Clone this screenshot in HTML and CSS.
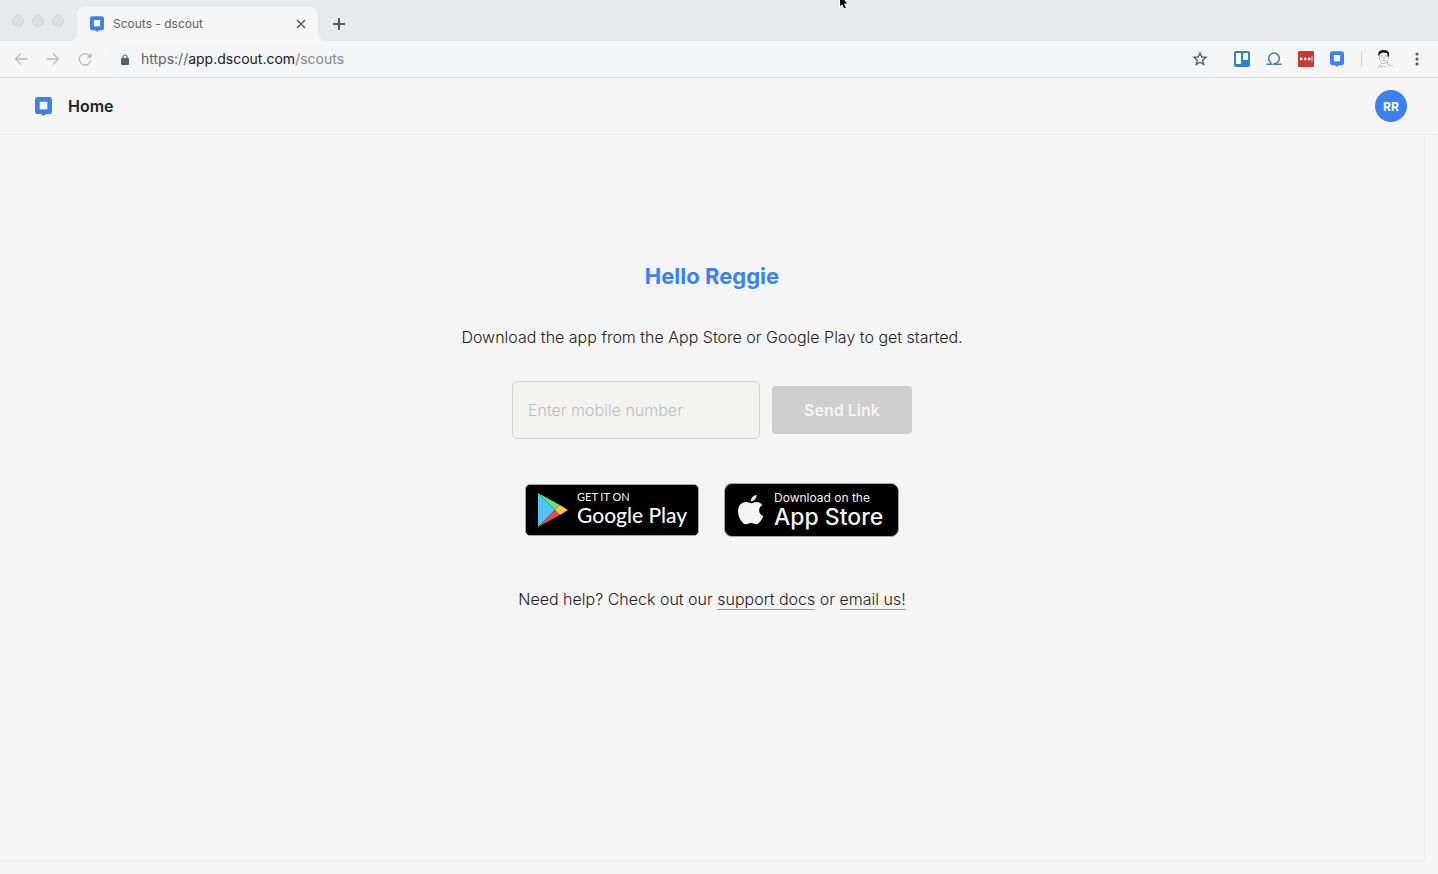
FILE: index.html
```html
<!DOCTYPE html>
<html lang="en">
<head>
  <meta charset="UTF-8">
  <meta name="viewport" content="width=device-width, initial-scale=1">
  <title>Scouts - dscout</title>
  <link rel="stylesheet" href="styles.css">
</head>
<body>
  <!-- Browser tabs -->
  <div class="tab-strip">
    <div class="window-dots">
      <span class="dot"></span>
      <span class="dot"></span>
      <span class="dot"></span>
    </div>
    <div class="tab">
      <svg class="tab-logo" viewBox="0 0 18 20"><path d="M3 0h12a3 3 0 0 1 3 3v12a3 3 0 0 1-3 3h-3l-3 2-3-2H3a3 3 0 0 1-3-3V3a3 3 0 0 1 3-3z" fill="#3b82f0"/><path d="M5 5h8v8H5z" fill="#fff"/></svg>
      <span class="tab-title">Scouts - dscout</span>
      <button class="icon-button" aria-label="Close tab">
        <svg width="10" height="10" viewBox="0 0 10 10"><path d="M1 1l8 8M9 1L1 9" stroke="#5a5d61" stroke-width="1.500"/></svg>
      </button>
    </div>
    <button class="icon-button new-tab" aria-label="New tab">
      <svg width="12" height="12" viewBox="0 0 12 12"><path d="M6 0v12M0 6h12" stroke="#55585c" stroke-width="2"/></svg>
    </button>
    <svg class="cursor" width="12" height="10" viewBox="0 0 12 10"><path d="M.5-1v8L3 5l2 4 2.500-1-2-4H9L5-1z" fill="#000" stroke="#fff" stroke-width="1"/></svg>
  </div>

  <!-- Address bar -->
  <div class="toolbar">
    <div class="nav-buttons">
      <button class="icon-button" aria-label="Back">
        <svg width="14" height="14" viewBox="0 0 14 14"><path d="M13.500 7H1.500M7 1.500L1.500 7 7 12.500" fill="none" stroke="#b9bbbd" stroke-width="1.300"/></svg>
      </button>
      <button class="icon-button" aria-label="Forward">
        <svg width="14" height="14" viewBox="0 0 14 14"><path d="M.5 7h12M7 1.500L12.500 7 7 12.500" fill="none" stroke="#b9bbbd" stroke-width="1.300"/></svg>
      </button>
      <button class="icon-button" aria-label="Reload">
        <svg width="14" height="14" viewBox="0 0 14 14"><path d="M11.800 4.200A5.700 5.700 0 1 0 12.700 8" fill="none" stroke="#b9bbbd" stroke-width="1.400"/><path d="M13.500.8v5H8.500z" fill="#b9bbbd"/></svg>
      </button>
    </div>
    <div class="address">
      <svg class="lock" width="8" height="11" viewBox="0 0 8 11"><path d="M2 5V3a2 2 0 0 1 4 0v2" fill="none" stroke="#5b5e62" stroke-width="1.200"/><rect y="4" width="8" height="7" rx="1" fill="#5b5e62"/></svg>
      <span class="url">https://<span class="url-host">app.dscout.com</span><span class="url-path">/scouts</span></span>
      <button class="icon-button" aria-label="Bookmark">
        <svg width="16" height="16" viewBox="0 0 16 16"><path d="M8 2l1.700 4 4.300.4-3.300 2.800 1 4.300L8 11.200l-3.700 2.300 1-4.300L2 6.400 6.300 6z" fill="none" stroke="#5b5e62" stroke-width="1.400"/></svg>
      </button>
    </div>
    <div class="extensions">
      <svg width="16" height="16" viewBox="0 0 16 16"><rect width="16" height="16" rx="2" fill="#2f7fca"/><rect x="2" y="2" width="5" height="11" rx="1" fill="#fff"/><rect x="9" y="2" width="5" height="7" rx="1" fill="#fff"/></svg>
      <svg width="16" height="16" viewBox="0 0 16 16"><path d="M.5 13.300H5.500L4.300 11.200A5.300 5.300 0 1 1 8 12.700M7 13.300h8.500" fill="none" stroke="#4381bd" stroke-width="1.600"/></svg>
      <svg width="16" height="16" viewBox="0 0 16 16"><rect width="16" height="16" rx="1" fill="#c63a33"/><circle cx="3.200" cy="8" r="1.400" fill="#fff"/><circle cx="7.200" cy="8" r="1.400" fill="#fff"/><circle cx="11.200" cy="8" r="1.400" fill="#fff"/><path d="M14 5v6" stroke="#f0b9b5"/></svg>
      <svg class="tab-logo" viewBox="0 0 18 20"><path d="M3 0h12a3 3 0 0 1 3 3v12a3 3 0 0 1-3 3h-3l-3 2-3-2H3a3 3 0 0 1-3-3V3a3 3 0 0 1 3-3z" fill="#3b82f0"/><path d="M5 5h8v8H5z" fill="#fff"/></svg>
    </div>
    <div class="profile">
      <svg width="18" height="20" viewBox="0 0 18 20"><path d="M3.500 4v6.500l3 4 4.500-1 1-3V4" fill="#fff" stroke="#aaa" stroke-width=".8"/><path d="M2.500 7C1.500 3 4 1 7.500 1s6.500 1.500 5.500 6l-1 1-1-4-4-.5L4 5z" fill="#171717"/><path d="M5 7h2M9 7h2M8 8v2M6.500 11.500h3" stroke="#777" stroke-width=".8"/><path d="M6 14l-2 2-2 3M11 13l1 3 5 1M4 18l3-1 3 1" fill="none" stroke="#bbb" stroke-width=".8"/></svg>
      <button class="icon-button" aria-label="Menu">
        <svg width="4" height="14" viewBox="0 0 4 14"><circle cx="2" cy="2" r="1.600" fill="#5b5e62"/><circle cx="2" cy="7" r="1.600" fill="#5b5e62"/><circle cx="2" cy="12" r="1.600" fill="#5b5e62"/></svg>
      </button>
    </div>
  </div>

  <!-- App header -->
  <header class="app-header">
    <a class="home-link" href="#">
      <svg width="17" height="19" viewBox="0 0 18 20"><path d="M3 0h12a3 3 0 0 1 3 3v12a3 3 0 0 1-3 3h-3l-3 2-3-2H3a3 3 0 0 1-3-3V3a3 3 0 0 1 3-3z" fill="#3b82f0"/><path d="M5 5h8v8H5z" fill="#fff"/></svg>
      Home
    </a>
    <button class="avatar">RR</button>
  </header>

  <!-- Main content -->
  <main class="welcome">
    <h1 class="welcome-title">Hello Reggie</h1>
    <p class="welcome-text">Download the app from the App Store or Google Play to get started.</p>
    <form class="link-form">
      <input class="phone-input" type="tel" placeholder="Enter mobile number" aria-label="Enter mobile number">
      <button class="send-button" type="submit" disabled>Send Link</button>
    </form>
    <div class="stores">
      <a class="store-badge google" href="#">
        <svg width="32" height="36" viewBox="0 0 32 36"><path d="M1 1v34l17-17z" fill="#4fc3f3"/><path d="M1 1l22 12-5 5z" fill="#66e07d"/><path d="M1 35l22-12-5-5z" fill="#e5484f"/><path d="M23 13l8 5-8 5-5-5z" fill="#fbc740"/></svg>
        <span class="store-label"><span class="store-small">GET IT ON</span><span class="store-name">Google Play</span></span>
      </a>
      <a class="store-badge apple" href="#">
        <svg width="28" height="32" viewBox="0 0 28 32"><path d="M19.500 1c.2 3.300-2.500 6.300-5.600 6.200C13.600 4.100 16.500 1.200 19.500 1z" fill="#f4f4f4"/><path d="M14.200 9.200c1.200 0 3-1.500 5.600-1.300 2.400.2 4.300 1.200 5.500 3-4.700 3-4 9.300.9 11.200-1 3-3.700 8-6.700 8.200-2 .1-2.900-1.200-5.300-1.200s-3.300 1.200-5.200 1.200C5.200 30.300 1 23.500 1 17.300c0-5.900 3.900-9.300 8-9.300 2.200 0 4 1.200 5.200 1.200z" fill="#f4f4f4"/></svg>
        <span class="store-label"><span class="store-small">Download on the</span><span class="store-name">App Store</span></span>
      </a>
    </div>
    <p class="help">Need help? Check out our <a href="#">support docs</a> or <a href="#">email us!</a></p>
  </main>
</body>
</html>
```
FILE: styles.css
```css
* {
  margin: 0;
  padding: 0;
  box-sizing: border-box;
}
body {
  min-height: 100vh;
  display: flex;
  flex-direction: column;
  background: #f5f5f5;
  color: #222;
  font-family: Inter, sans-serif;
  font-size: 16px;
}
button {
  font-family: inherit;
  border: none;
  cursor: pointer;
}
svg {
  display: block;
  flex-shrink: 0;
}
.icon-button {
  background: none;
}
/* Tab strip */
.tab-strip {
  position: relative;
  height: 41px;
  display: flex;
  align-items: flex-end;
  background: #e7e9eb;
}
.window-dots {
  display: flex;
  gap: 8px;
  padding: 0 13px 14px 12px;
}
.dot {
  width: 12px;
  height: 12px;
  border: 1px solid #d4d5d6;
  border-radius: 50%;
  background: #dedede;
}
.tab {
  position: relative;
  width: 241px;
  height: 34px;
  display: flex;
  align-items: center;
  padding: 0 12px 0 13px;
  border-radius: 8px 8px 0 0;
  background: #f5f5f5;
}
/* Flared feet of the active tab */
.tab::before,
.tab::after {
  content: "";
  position: absolute;
  bottom: 0;
  width: 8px;
  height: 8px;
}
.tab::before {
  right: 100%;
  background: radial-gradient(circle at 0 0, transparent 8px, #f5f5f5 8px);
}
.tab::after {
  left: 100%;
  background: radial-gradient(circle at 100% 0, transparent 8px, #f5f5f5 8px);
}
.tab-logo {
  width: 14px;
  height: 16px;
}
.tab-title {
  flex: 1;
  margin-left: 9px;
  padding-bottom: 2px;
  color: #606367;
  font-size: 12px;
}
.new-tab {
  margin-left: 15px;
  padding-bottom: 11px;
}
.cursor {
  position: absolute;
  top: 0;
  left: 58%;
  margin-left: 5px;
}
/* Toolbar */
.toolbar {
  height: 37px;
  display: flex;
  align-items: center;
  padding: 0 19px 0 14px;
  border-bottom: 1px solid #dcdcdc;
}
.nav-buttons {
  display: flex;
  gap: 18px;
}
.address {
  flex: 1;
  height: 28px;
  display: flex;
  align-items: center;
  margin-left: 16px;
  padding: 0 8px 0 13px;
  border-radius: 14px;
  background: #f2f4f5;
}
.url {
  flex: 1;
  margin-left: 12px;
  padding-bottom: 2px;
  color: #606367;
  font-size: 14px;
}
.url-host {
  color: #202124;
}
.url-path {
  color: #85888b;
}
.extensions {
  display: flex;
  align-items: center;
  gap: 16px;
  margin-left: 18px;
}
.profile {
  height: 16px;
  display: flex;
  align-items: center;
  gap: 21px;
  margin-left: 17px;
  padding-left: 14px;
  border-left: 1px solid #d2d2d2;
}
/* App header */
.app-header {
  height: 57px;
  display: flex;
  align-items: center;
  justify-content: space-between;
  padding: 0 31px 0 35px;
  border-bottom: 1px solid #e9e9e9;
}
.home-link {
  display: flex;
  align-items: center;
  gap: 16px;
  color: #222;
  font-size: 16px;
  font-weight: 600;
  text-decoration: none;
}
.avatar {
  width: 32px;
  height: 32px;
  border-radius: 50%;
  background: #3b82f0;
  color: #fff;
  font-size: 12px;
  font-weight: 700;
}
/* Welcome */
.welcome {
  flex: 1;
  display: flex;
  flex-direction: column;
  align-items: center;
  margin: 0 13px 12px 0;
  padding: 125px 0 40px;
  border-right: 1px solid #ececec;
  border-bottom: 1px solid #ececec;
  background: #f4f4f4;
  font-weight: 300;
}
.welcome-title {
  color: #3b82f0;
  font-size: 22px;
  font-weight: 700;
  line-height: 32px;
}
.welcome-text {
  margin-top: 33px;
  line-height: 24px;
}
.link-form {
  display: flex;
  align-items: center;
  gap: 12px;
  margin-top: 32px;
}
.phone-input {
  width: 248px;
  height: 58px;
  padding: 0 15px;
  border: 1px solid #d3d3d3;
  border-radius: 5px;
  background: #f2f2f1;
  color: #222;
  font-family: inherit;
  font-size: 16px;
  font-weight: 300;
}
.phone-input::placeholder {
  color: #bebebe;
}
.send-button {
  width: 140px;
  height: 48px;
  border-radius: 4px;
  background: #cecece;
  color: #f4f4f4;
  font-size: 16px;
  font-weight: 600;
}
/* Store badges */
.stores {
  display: flex;
  align-items: center;
  gap: 25px;
  margin-top: 44px;
}
.store-badge {
  display: flex;
  align-items: center;
  border: 1px solid #a6a6a6;
  background: #000;
  color: #f4f4f4;
  text-decoration: none;
}
.store-label {
  display: flex;
  flex-direction: column;
}
.google {
  width: 174px;
  height: 52px;
  gap: 8px;
  padding-left: 11px;
  border-radius: 5px;
  font-family: Lato, sans-serif;
}
.google .store-label {
  padding-bottom: 4px;
}
.apple {
  width: 175px;
  height: 54px;
  gap: 9px;
  padding-left: 12px;
  border-radius: 8px;
}
.store-small {
  font-size: 11px;
  font-weight: 400;
  line-height: 13px;
}
.store-name {
  font-size: 21px;
  font-weight: 500;
  line-height: 23px;
}
.apple .store-small {
  font-size: 12px;
  line-height: 14px;
}
.apple .store-name {
  font-size: 23px;
  line-height: 25px;
}
.help {
  margin-top: 50px;
  line-height: 24px;
}
.help a {
  color: #222;
  text-decoration: none;
  border-bottom: 1px solid #999;
}
```
